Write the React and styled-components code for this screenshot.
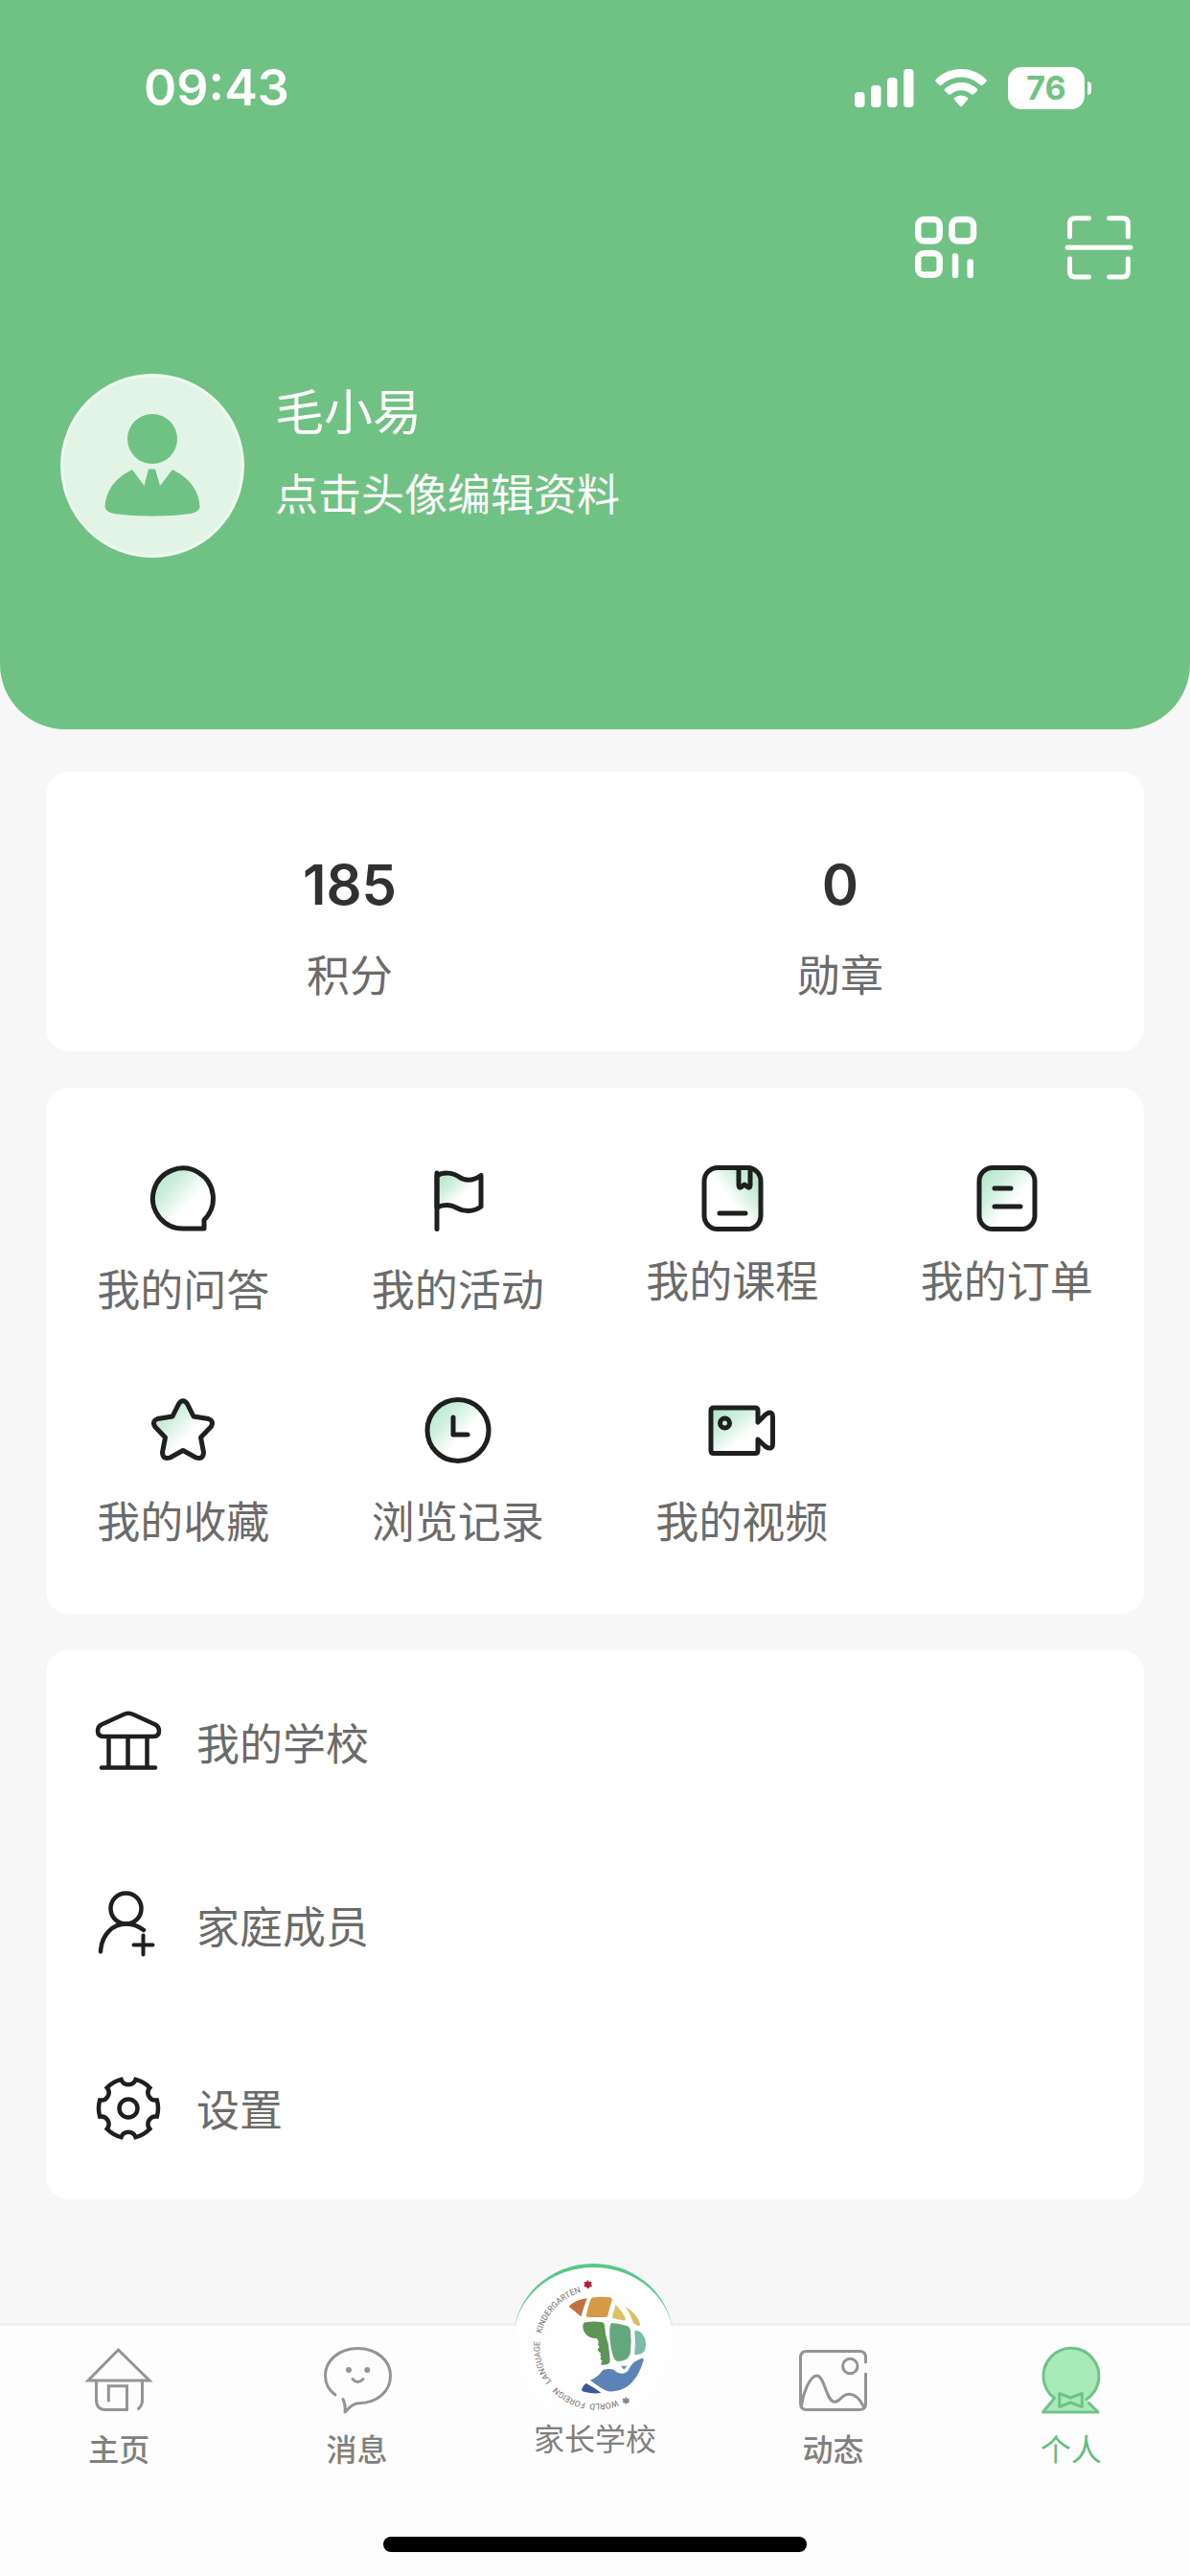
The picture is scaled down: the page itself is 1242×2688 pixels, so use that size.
import React from "react";
import styled, { createGlobalStyle } from "styled-components";

const cjk = `"Noto Sans CJK SC", "Noto Sans", sans-serif`;
const latin = `Inter, "Noto Sans CJK SC", sans-serif`;

const GlobalStyle = createGlobalStyle`
  *, *::before, *::after { box-sizing: border-box; }
  body { margin: 0; background: #f7f7f7; font-family: ${cjk}; }
  button { margin: 0; padding: 0; border: 0; background: none; font: inherit; color: inherit; cursor: pointer; }
  a { color: inherit; text-decoration: none; }
  svg { display: block; flex: none; overflow: visible; }
`;

const Page = styled.div`
  display: flex;
  flex-direction: column;
  min-height: 100vh;
`;

const Header = styled.header`
  padding-bottom: 179px;
  border-radius: 0 0 68px 68px;
  background: #6fc284;
  color: #fff;
`;

const StatusBar = styled.div`
  display: flex;
  align-items: center;
  justify-content: space-between;
  height: 184px;
  padding: 0 103px 0 150px;
`;

const Clock = styled.time`
  font: 600 52px/64px ${latin};
`;

const StatusIcons = styled.div`
  display: flex;
  align-items: center;
  gap: 22px;
`;

const Battery = styled.div`
  display: flex;
  align-items: center;
  gap: 3px;
`;

const BatteryLevel = styled.span`
  width: 80px;
  border-radius: 14px;
  background: #fff;
  color: #6fc284;
  font: 700 34px/44px ${latin};
  text-align: center;
`;

const BatteryTip = styled.span`
  width: 4px;
  height: 14px;
  border-radius: 0 4px 4px 0;
  background: #fff;
`;

const Actions = styled.div`
  display: flex;
  justify-content: flex-end;
  gap: 88px;
  padding: 38px 59px 96px;
`;

const Profile = styled.div`
  display: flex;
  gap: 32px;
  padding-left: 63px;
`;

const Avatar = styled.button`
  width: 192px;
  height: 192px;
`;

const ProfileText = styled.div`
  display: flex;
  flex-direction: column;
  gap: 20px;
  padding-top: 2px;
`;

const Name = styled.h1`
  margin: 0;
  font-size: 51px;
  font-weight: 400;
  line-height: 70px;
`;

const Hint = styled.p`
  margin: 0;
  font-size: 45px;
  line-height: 64px;
`;

const Main = styled.main`
  display: flex;
  flex-direction: column;
  gap: 38px;
  padding: 44px 48px;
`;

const Card = styled.section`
  border-radius: 24px;
  background: #fff;
  color: #6b6b6b;
  font-size: 45px;
  line-height: 64px;
`;

const Stats = styled(Card)`
  display: grid;
  grid-template-columns: 1fr 1fr;
  padding: 85px 61px 49px;
`;

const Stat = styled.div`
  display: flex;
  flex-direction: column;
  align-items: center;
  gap: 28px;
`;

const StatValue = styled.strong`
  color: #303133;
  font: 600 58px/66px ${latin};
`;

const Shortcuts = styled(Card)`
  display: grid;
  grid-template-columns: repeat(4, 1fr);
  row-gap: 81px;
  padding: 80px 0 66px;
`;

const Shortcut = styled.button`
  display: flex;
  flex-direction: column;
  align-items: center;
  gap: ${(p) => (p.$tight ? "16px" : "25px")};
  padding-left: ${(p) => (p.$inset ? "20px" : "0")};
`;

const MenuRow = styled.a`
  display: flex;
  align-items: center;
  gap: 35px;
  height: 191px;
  padding: 0 50px;
`;

const TabBar = styled.footer`
  margin-top: auto;
  padding-bottom: 25px;
  border-top: 3px solid #f0f0f0;
  background: #fdfdfd;
`;

const Tabs = styled.nav`
  display: grid;
  grid-template-columns: repeat(5, 1fr);
  padding-top: 21px;
`;

const Tab = styled.a`
  display: flex;
  flex-direction: column;
  align-items: center;
  gap: 11px;
  color: ${(p) => (p.$active ? "#5fbf7c" : "#808080")};
  font-size: 32px;
  font-weight: ${(p) => (p.$active ? 400 : 500)};
  line-height: 46px;
`;

const SchoolTab = styled(Tab)`
  gap: 0;
  margin-top: -86px;
  font-weight: 400;
`;

const LogoHolder = styled.span`
  height: 158px;
`;

const HomeIndicator = styled.div`
  width: 442px;
  height: 16px;
  margin: 70px auto 0;
  border-radius: 8px;
  background: #000;
`;

function Icon({ children, width = 5, color = "#1f1f1f" }) {
  return (
    <svg width="72" height="72" viewBox="0 0 72 72" fill="none" stroke={color} strokeWidth={width} strokeLinecap="round" strokeLinejoin="round" aria-hidden="true">
      {children}
    </svg>
  );
}

const HiddenDefs = styled.svg`
  position: absolute;
`;

function Gradients() {
  return (
    <HiddenDefs width="0" height="0" aria-hidden="true">
      <defs>
        <linearGradient id="mint" x1="0" y1="0.1" x2="0.75" y2="0.8">
          <stop offset="0" stopColor="#b2e5c8" />
          <stop offset="0.35" stopColor="#cdeedb" />
          <stop offset="0.75" stopColor="#fff" />
        </linearGradient>
        <linearGradient id="mintRight" x1="1" y1="0.1" x2="0.3" y2="0.7">
          <stop offset="0" stopColor="#b2e5c8" />
          <stop offset="0.35" stopColor="#cdeedb" />
          <stop offset="0.75" stopColor="#fff" />
        </linearGradient>
      </defs>
    </HiddenDefs>
  );
}

const shortcuts = [
  {
    label: "我的问答",
    art: <path d="M36 67A31.5 31.5 0 1 1 58 58V67Z" fill="url(#mint)" />,
  },
  {
    label: "我的活动",
    art: (
      <>
        <path d="M14 12C20 8 30 8 37 13S52 17 60 11.500V44C52 50 42 49.500 36 46S22 41 14 45Z" fill="url(#mint)" />
        <path d="M14 9V67.500" />
      </>
    ),
  },
  {
    label: "我的课程",
    tight: true,
    art: (
      <>
        <rect x="7" y="3.500" width="59" height="64" rx="14" fill="url(#mintRight)" />
        <path d="M43 4V21Q43 26 46.500 23L49 21L51.500 23Q55 26 55 21V4M23 51H50" />
      </>
    ),
  },
  {
    label: "我的订单",
    tight: true,
    art: (
      <>
        <rect x="7" y="3.500" width="58" height="64" rx="14" fill="url(#mint)" />
        <path d="M23 25H40M23 44H50" />
      </>
    ),
  },
  {
    label: "我的收藏",
    art: (
      <path
        d="M31.500 8Q36 1.500 40.500 8L47 21L62.500 23.500Q69 26 65 32L54.500 43L57.500 58.500Q57 66.500 49.500 64L36 56.500L22.500 64Q15 66.500 14.500 58.500L17.500 43L7 32Q3 26 9.500 23.500L25 21Z"
        fill="url(#mint)"
      />
    ),
  },
  {
    label: "浏览记录",
    art: (
      <>
        <circle cx="36" cy="35.500" r="32" fill="url(#mint)" />
        <path d="M31 22V40H46" />
      </>
    ),
  },
  {
    label: "我的视频",
    inset: true,
    art: (
      <>
        <path
          d="M53 27V15Q53 12 50 12H7Q4 12 4 15V56.500Q4 59.500 7 59.500H50Q53 59.500 53 56.500V45L61 52.500Q68.500 57 68.500 49V22Q68.500 14 61 19Z"
          fill="url(#mint)"
        />
        <circle cx="18.500" cy="28" r="5" />
      </>
    ),
  },
];

// Six-toothed cog: an arc along the rim for each tooth, a scooped notch between teeth.
const cogPath = (() => {
  const at = (deg) => {
    const a = (deg * Math.PI) / 180;
    return `${(36 + 31 * Math.cos(a)).toFixed(2)} ${(36 + 31 * Math.sin(a)).toFixed(2)}`;
  };
  let d = `M${at(-16)}`;
  for (let tooth = 0; tooth < 6; tooth += 1) {
    const mid = tooth * 60;
    d += `A31 31 0 0 1 ${at(mid + 16)}A8 8 0 0 0 ${at(mid + 44)}`;
  }
  return `${d}Z`;
})();

const menu = [
  {
    label: "我的学校",
    art: (
      <>
        <path d="M31 7Q36 4.500 41 7L64 17.500Q68 19.500 68 24Q68 30 62 30H10Q4 30 4 24Q4 19.500 8 17.500Z" />
        <path d="M15.500 30V62M35.500 30V62M55.500 30V62M8 62.500H64" />
      </>
    ),
  },
  {
    label: "家庭成员",
    art: (
      <>
        <circle cx="33.500" cy="18.500" r="16" />
        <path d="M7 63.500C8 45 20 34.500 34 34.500C41 34.500 46 36.500 52 41" />
        <path d="M41.500 56.500H61.500M51.500 46.500V66.500" strokeWidth="4" />
      </>
    ),
  },
  {
    label: "设置",
    art: (
      <>
        <path d={cogPath} strokeLinejoin="miter" />
        <circle cx="36" cy="36" r="9.500" />
      </>
    ),
  },
];

function SchoolLogo() {
  return (
    <svg width="168" height="168" viewBox="111 96 504 504" role="img" aria-label="World Foreign Language Kindergarten">
      <defs>
        <linearGradient id="ring" x1="0" y1="0" x2="0" y2="1">
          <stop offset="0" stopColor="#58c887" />
          <stop offset="0.7" stopColor="#58c887" />
          <stop offset="1" stopColor="#58c887" stopOpacity="0" />
        </linearGradient>
        <path id="motto" d="M546 357A178 178 0 1 1 190 357A178 178 0 1 1 546 357" />
      </defs>
      <circle cx="358" cy="348" r="250" fill="#fefefe" />
      <path d="M107 335A251 239 0 0 1 609 335A251 227 0 0 0 107 335Z" fill="url(#ring)" />
      <g fill="#6f6f6f" fontFamily="Roboto, 'Liberation Sans', sans-serif" fontSize="26">
        <text><textPath href="#motto" startOffset="213">WORLD</textPath></text>
        <text><textPath href="#motto" startOffset="314">FOREIGN</textPath></text>
        <text><textPath href="#motto" startOffset="443">LANGUAGE</textPath></text>
        <text><textPath href="#motto" startOffset="601">KINDERGARTEN</textPath></text>
      </g>
      <path d="M340 149l4 6 7-1-1 8 2 5-7 1-4 6-4-6-7-1 2-6-2-6 7 0Z" fill="#b01c3c" stroke="#b01c3c" strokeWidth="3" />
      <path d="M460 514l3 6 6-1-1 6 2 5-6 1-4 5-4-5-6-1 2-5-2-6 7 1Z" fill="#888" stroke="#888" strokeWidth="2" />
      <path d="M281 231Q302 208 338 205Q328 232 319 262Q301 246 281 231Z" fill="#c0713d" />
      <path d="M357 202Q384 198 410 202Q418 204 416 212Q408 234 404 256Q403 264 395 264H342Q334 264 336 256Q340 234 349 209Q351 203 357 202Z" fill="#d59a45" />
      <path d="M427 224Q448 244 459 268Q460 276 450 274Q434 271 418 266Q416 263 418 258Q424 241 427 224Z" fill="#dcc067" />
      <path d="M458 230Q494 252 504 284Q505 293 496 290L484 283Q474 254 458 230Z" fill="#dcc067" />
      <path d="M334 280Q360 275 386 280Q393 282 393 290Q394 318 404 346Q408 370 410 398Q411 407 404 410Q394 414 384 413Q379 411 384 405Q388 399 380 396Q378 392 383 388Q376 383 382 377Q370 370 372 364L377 356Q370 352 373 347Q376 338 368 330Q350 332 336 319Q324 306 325 290Q326 281 334 280Z" fill="#5b9655" />
      <path d="M418 282Q444 284 465 292Q473 296 474 305Q478 340 474 374Q471 388 462 395Q450 402 434 402Q426 401 423 394Q410 360 409 320Q408 302 411 288Q412 282 418 282Z" fill="#65a77c" />
      <path d="M490 305Q506 306 514 320Q528 342 518 370Q512 380 490 382Q486 382 487 375Q492 342 487 311Q487 305 490 305Z" fill="#7cbda9" />
      <path d="M445 415Q454 418 461 415Q462 424 453 427Q447 425 445 415Z" fill="#5d9da7" />
      <path d="M348 461Q374 451 388 429Q405 424 422 428Q432 440 450 440Q466 438 472 421Q483 401 510 392Q517 392 514 402Q498 456 464 481Q438 499 404 496Q384 489 348 461Z" fill="#5c83b5" />
      <path d="M336 471Q360 484 382 500Q362 506 328 497Q319 496 322 489Q327 474 336 471Z" fill="#3b5a9c" />
    </svg>
  );
}

export default function App() {
  return (
    <Page>
      <GlobalStyle />
      <Gradients />
      <Header>
        <StatusBar>
          <Clock>09:43</Clock>
          <StatusIcons>
            <svg width="62" height="40" viewBox="0 0 62 40" fill="#fff" aria-hidden="true">
              <rect y="24" width="10.500" height="16" rx="4" />
              <rect x="17" y="17" width="10.500" height="23" rx="4" />
              <rect x="34" y="9" width="10.500" height="31" rx="4" />
              <rect x="51" width="10.500" height="40" rx="4" />
            </svg>
            <svg width="54" height="40" viewBox="0 0 54 40" fill="#fff" aria-hidden="true">
              <path d="M27 0C37 0 46 4 53 10.500Q54.500 12 53 13.500L50 16.500Q48.500 17.500 47 16.500C41.500 11.500 34.500 8.500 27 8.500S12.500 11.500 7 16.500Q5.500 17.500 4 16.500L1 13.500Q-0.500 12 1 10.500C8 4 17 0 27 0Z" />
              <path d="M27 14C33.500 14 39 16.300 43.500 20.300Q45 21.800 43.500 23.200L40.300 26.300Q39 27.300 37.500 26.300C34.500 23.700 31 22.300 27 22.300S19.500 23.700 16.500 26.300Q15 27.300 13.700 26.300L10.500 23.200Q9 21.800 10.500 20.300C15 16.300 20.500 14 27 14Z" />
              <path d="M27 27.500Q31 27.500 34 30Q35 31 34 32L28.300 38.500Q27 40 25.700 38.500L20 32Q19 31 20 30Q23 27.500 27 27.500Z" />
            </svg>
            <Battery>
              <BatteryLevel>76</BatteryLevel>
              <BatteryTip />
            </Battery>
          </StatusIcons>
        </StatusBar>

        <Actions>
          <button type="button" aria-label="二维码">
            <Icon color="#fff" width={6.5}>
              <rect x="7.200" y="7" width="22.500" height="22.500" rx="6" />
              <rect x="42.500" y="7" width="22.500" height="22.500" rx="6" />
              <rect x="7.200" y="42.200" width="22.500" height="22.500" rx="6" />
              <path d="M46 45.500V65M61.700 51.500V65" />
            </Icon>
          </button>
          <button type="button" aria-label="扫一扫">
            <Icon color="#fff">
              <path d="M5.500 25V11Q5.500 5.700 11 5.700H25.500M46.500 5.700H61Q66.300 5.700 66.300 11V25M66.300 48V61.500Q66.300 67 61 67H46.500M25.500 67H11Q5.500 67 5.500 61.500V48M3 36.300H69" />
            </Icon>
          </button>
        </Actions>

        <Profile>
          <Avatar type="button" aria-label="编辑头像">
            <svg width="192" height="192" viewBox="0 0 192 192" aria-hidden="true">
              <circle cx="96" cy="96" r="94.500" fill="#e1f4e6" stroke="#ecfaf0" strokeWidth="3" />
              <circle cx="96" cy="68" r="26" fill="#6fc284" />
              <path d="M75 100L87.500 117L92 99.500H99L104 117L117 100C134 108 145 122 145.500 139Q145 144 136 146Q118 148.500 96 148.500T56 146Q47 144 46.500 139C47 122 58 108 75 100Z" fill="#6fc284" />
            </svg>
          </Avatar>
          <ProfileText>
            <Name>毛小易</Name>
            <Hint>点击头像编辑资料</Hint>
          </ProfileText>
        </Profile>
      </Header>

      <Main>
        <Stats>
          <Stat>
            <StatValue>185</StatValue>
            <span>积分</span>
          </Stat>
          <Stat>
            <StatValue>0</StatValue>
            <span>勋章</span>
          </Stat>
        </Stats>

        <Shortcuts>
          {shortcuts.map((s) => (
            <Shortcut key={s.label} type="button" $tight={s.tight} $inset={s.inset}>
              <Icon>{s.art}</Icon>
              <span>{s.label}</span>
            </Shortcut>
          ))}
        </Shortcuts>

        <Card>
          {menu.map((m) => (
            <MenuRow key={m.label} href="#">
              <Icon width={4.5}>{m.art}</Icon>
              <span>{m.label}</span>
            </MenuRow>
          ))}
        </Card>
      </Main>

      <TabBar>
        <Tabs>
          <Tab href="#">
            <Icon color="#949494" width={3}>
              <path d="M35.500 4L68 36H4Z" strokeLinejoin="miter" />
              <path d="M12.500 36V56Q12.500 66.500 22 66.500H44.500V41.700H25.300V57M60.500 36V57Q60.500 62 56.500 65.500" strokeLinejoin="miter" />
            </Icon>
            <span>主页</span>
          </Tab>
          <Tab href="#">
            <Icon color="#949494" width={3}>
              <path d="M13 51C6 46 2.500 39 2.500 31C2.500 15 17 2.500 36.500 2.500S70.500 15 70.500 31S57 60 36.500 59.700Q31 60 23 69Q24 62 21 55.500" />
              <path d="M31 34.500Q36.500 40.500 42 34.500" />
              <circle cx="27" cy="25" r="3" fill="#949494" stroke="none" />
              <circle cx="46.300" cy="25" r="3" fill="#949494" stroke="none" />
            </Icon>
            <span>消息</span>
          </Tab>
          <SchoolTab href="#">
            <LogoHolder>
              <SchoolLogo />
            </LogoHolder>
            <span>家长学校</span>
          </SchoolTab>
          <Tab href="#">
            <Icon color="#949494" width={3}>
              <path d="M70.500 18V12Q70.500 5.500 64 5.500H9Q2.500 5.500 2.500 12V60Q2.500 66.500 9 66.500H64Q70.500 66.500 70.500 60V28" strokeLinecap="butt" />
              <circle cx="54.300" cy="21" r="7.700" />
              <path d="M3.500 62C5 50 12 31 19.500 31C28 31 29 58.300 38 58.300C44 58.300 45 50.300 53.500 50.300C60 50.300 64 55 68 62.500" />
            </Icon>
            <span>动态</span>
          </Tab>
          <Tab href="#" $active aria-current="page">
            <Icon color="#6fc389" width={3}>
              <path d="M52 55.500A29 29 0 1 0 18.500 54.500L6.500 69H64L54.500 59.500Z" fill="#a9eab9" stroke="none" />
              <path d="M52 55.500A29 29 0 1 0 18.500 54.500L6.500 69H64L54.500 59.500" />
              <path d="M23.700 49.500L35.300 54L47.300 49.500V63.500L35.300 59L23.700 63.500Z" />
            </Icon>
            <span>个人</span>
          </Tab>
        </Tabs>
        <HomeIndicator />
      </TabBar>
    </Page>
  );
}
